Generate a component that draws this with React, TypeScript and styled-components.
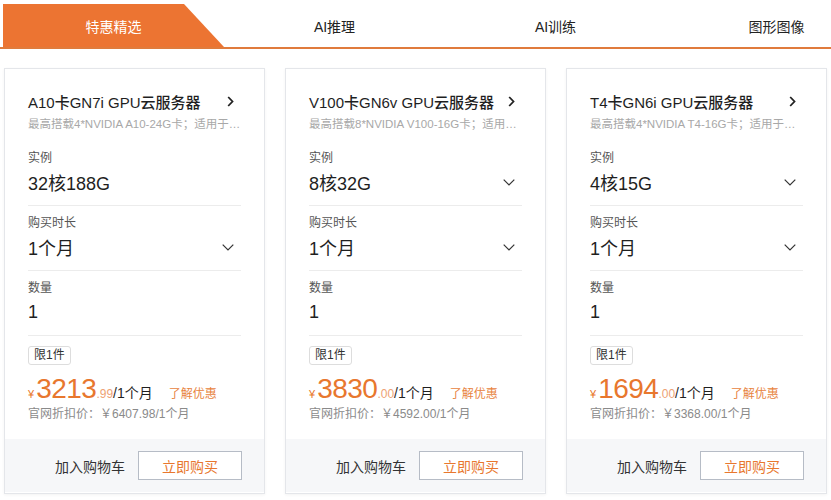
import React from "react";
import styled, { createGlobalStyle } from "styled-components";

const GlobalStyle = createGlobalStyle`
  html, body {
    margin: 0;
    padding: 0;
    background: #ffffff;
    font-family: "Liberation Sans", "Noto Sans CJK SC", sans-serif;
  }
`;

const Page = styled.div`
  width: 831px;
  height: 500px;
  overflow: hidden;
  padding-top: 4px;
  box-sizing: border-box;
`;

const TabBar = styled.div`
  display: flex;
  height: 43px;
  padding-left: 3px;
  border-bottom: 2px solid #e07b3c;
  overflow: hidden;
`;

const Tab = styled.div<{ $active?: boolean }>`
  flex: 0 0 221px;
  display: flex;
  align-items: center;
  justify-content: center;
  font-size: 14px;
  color: ${(p) => (p.$active ? "#ffffff" : "#222222")};
  background: ${(p) => (p.$active ? "#ec7432" : "transparent")};
  clip-path: ${(p) =>
    p.$active ? "polygon(0 0, calc(100% - 40px) 0, 100% 100%, 0 100%)" : "none"};
`;

const CardGrid = styled.div`
  display: grid;
  grid-template-columns: repeat(3, minmax(0, 1fr));
  gap: 20px;
  padding: 19px 4px 0;
`;

const Card = styled.div`
  min-width: 0;
  border: 1px solid #e4e6ea;
  box-shadow: 0 1px 3px rgba(0, 0, 0, 0.05);
  background: #ffffff;
  display: flex;
  flex-direction: column;
  height: 426px;
  box-sizing: border-box;
`;

const Body = styled.div`
  flex: 1;
  padding: 21px 23px 0;
  min-width: 0;
`;

const TitleRow = styled.div`
  display: flex;
  align-items: center;
  justify-content: space-between;
  height: 22px;
`;

const Title = styled.div`
  font-size: 15px;
  font-weight: 500;
  color: #1f1f1f;
`;

const Subtitle = styled.div`
  margin-top: 3px;
  font-size: 11.5px;
  line-height: 18px;
  color: #a8a8a8;
  white-space: nowrap;
  overflow: hidden;
  text-overflow: ellipsis;
  padding-bottom: 8px;
`;

const Field = styled.div`
  padding: 8px 0 10px;
  border-bottom: 1px solid #ececec;
`;

const Label = styled.div`
  font-size: 12px;
  line-height: 18px;
  color: #555555;
`;

const ValueRow = styled.div`
  margin-top: 2px;
  display: flex;
  align-items: center;
  justify-content: space-between;
  height: 26px;
`;

const Value = styled.div`
  font-size: 18px;
  color: #1f1f1f;
`;

const IconSlot = styled.span`
  display: flex;
  align-items: center;
  padding-right: 7px;
`;

const Tag = styled.div`
  display: inline-block;
  margin-top: 10px;
  height: 17px;
  line-height: 17px;
  padding: 0 5px;
  border: 1px solid #dddddd;
  border-radius: 3px;
  font-size: 12px;
  color: #333333;
`;

const PriceLine = styled.div`
  margin-top: 10px;
  height: 28px;
  display: flex;
  align-items: baseline;
  white-space: nowrap;
`;

const Currency = styled.span`
  font-size: 11px;
  color: #e8772e;
  margin-right: 2px;
`;

const Amount = styled.span`
  font-size: 28px;
  line-height: 28px;
  color: #e8772e;
  letter-spacing: -0.5px;
`;

const Cents = styled.span`
  font-size: 12px;
  color: #eea275;
`;

const Period = styled.span`
  font-size: 14px;
  color: #1f1f1f;
`;

const PromoLink = styled.span`
  margin-left: 16px;
  font-size: 12px;
  color: #e8843f;
`;

const OrigPrice = styled.div`
  margin-top: 2px;
  font-size: 12px;
  line-height: 18px;
  color: #8a8a8a;
`;

const Footer = styled.div`
  height: 53px;
  background: #f6f7f9;
  display: flex;
  align-items: center;
  justify-content: flex-end;
  gap: 13px;
  padding-right: 22px;
  margin-bottom: 1px;
`;

const CartText = styled.span`
  font-size: 14px;
  color: #333333;
`;

const BuyButton = styled.button`
  width: 104px;
  height: 29px;
  background: #ffffff;
  border: 1px solid #b6bcc6;
  font-family: inherit;
  font-size: 14px;
  color: #e8772e;
  cursor: pointer;
  padding: 0;
`;

const ChevronRight = () => (
  <svg width="7" height="11" viewBox="0 0 7 11">
    <polyline points="1.2,1 5.5,5.5 1.2,10" fill="none" stroke="#222" strokeWidth="1.8" />
  </svg>
);

const ChevronDown = () => (
  <svg width="12" height="7" viewBox="0 0 12 7">
    <polyline points="0.7,0.7 6,6 11.3,0.7" fill="none" stroke="#333" strokeWidth="1.2" />
  </svg>
);

type Product = {
  title: string;
  desc: string;
  spec: string;
  specSelect: boolean;
  amount: string;
  cents: string;
  orig: string;
};

const products: Product[] = [
  {
    title: "A10卡GN7i GPU云服务器",
    desc: "最高搭载4*NVIDIA A10-24G卡；适用于AI推理、图形渲染",
    spec: "32核188G",
    specSelect: false,
    amount: "3213",
    cents: ".99",
    orig: "6407.98",
  },
  {
    title: "V100卡GN6v GPU云服务器",
    desc: "最高搭载8*NVIDIA V100-16G卡；适用于AI训练、科学计算",
    spec: "8核32G",
    specSelect: true,
    amount: "3830",
    cents: ".00",
    orig: "4592.00",
  },
  {
    title: "T4卡GN6i GPU云服务器",
    desc: "最高搭载4*NVIDIA T4-16G卡；适用于AI推理、图形渲染",
    spec: "4核15G",
    specSelect: true,
    amount: "1694",
    cents: ".00",
    orig: "3368.00",
  },
];

const tabs = ["特惠精选", "AI推理", "AI训练", "图形图像"];

const ProductCard: React.FC<{ p: Product }> = ({ p }) => (
  <Card>
    <Body>
      <TitleRow>
        <Title>{p.title}</Title>
        <IconSlot>
          <ChevronRight />
        </IconSlot>
      </TitleRow>
      <Subtitle title={p.desc}>{p.desc}</Subtitle>
      <Field>
        <Label>实例</Label>
        <ValueRow>
          <Value>{p.spec}</Value>
          {p.specSelect && (
            <IconSlot>
              <ChevronDown />
            </IconSlot>
          )}
        </ValueRow>
      </Field>
      <Field>
        <Label>购买时长</Label>
        <ValueRow>
          <Value>1个月</Value>
          <IconSlot>
            <ChevronDown />
          </IconSlot>
        </ValueRow>
      </Field>
      <Field>
        <Label>数量</Label>
        <ValueRow>
          <Value>1</Value>
        </ValueRow>
      </Field>
      <Tag>限1件</Tag>
      <PriceLine>
        <Currency>¥</Currency>
        <Amount>{p.amount}</Amount>
        <Cents>{p.cents}</Cents>
        <Period>/1个月</Period>
        <PromoLink>了解优惠</PromoLink>
      </PriceLine>
      <OrigPrice>官网折扣价：￥{p.orig}/1个月</OrigPrice>
    </Body>
    <Footer>
      <CartText>加入购物车</CartText>
      <BuyButton>立即购买</BuyButton>
    </Footer>
  </Card>
);

export default function App() {
  return (
    <Page>
      <GlobalStyle />
      <TabBar>
        {tabs.map((t, i) => (
          <Tab key={t} $active={i === 0}>
            {t}
          </Tab>
        ))}
      </TabBar>
      <CardGrid>
        {products.map((p) => (
          <ProductCard key={p.title} p={p} />
        ))}
      </CardGrid>
    </Page>
  );
}
